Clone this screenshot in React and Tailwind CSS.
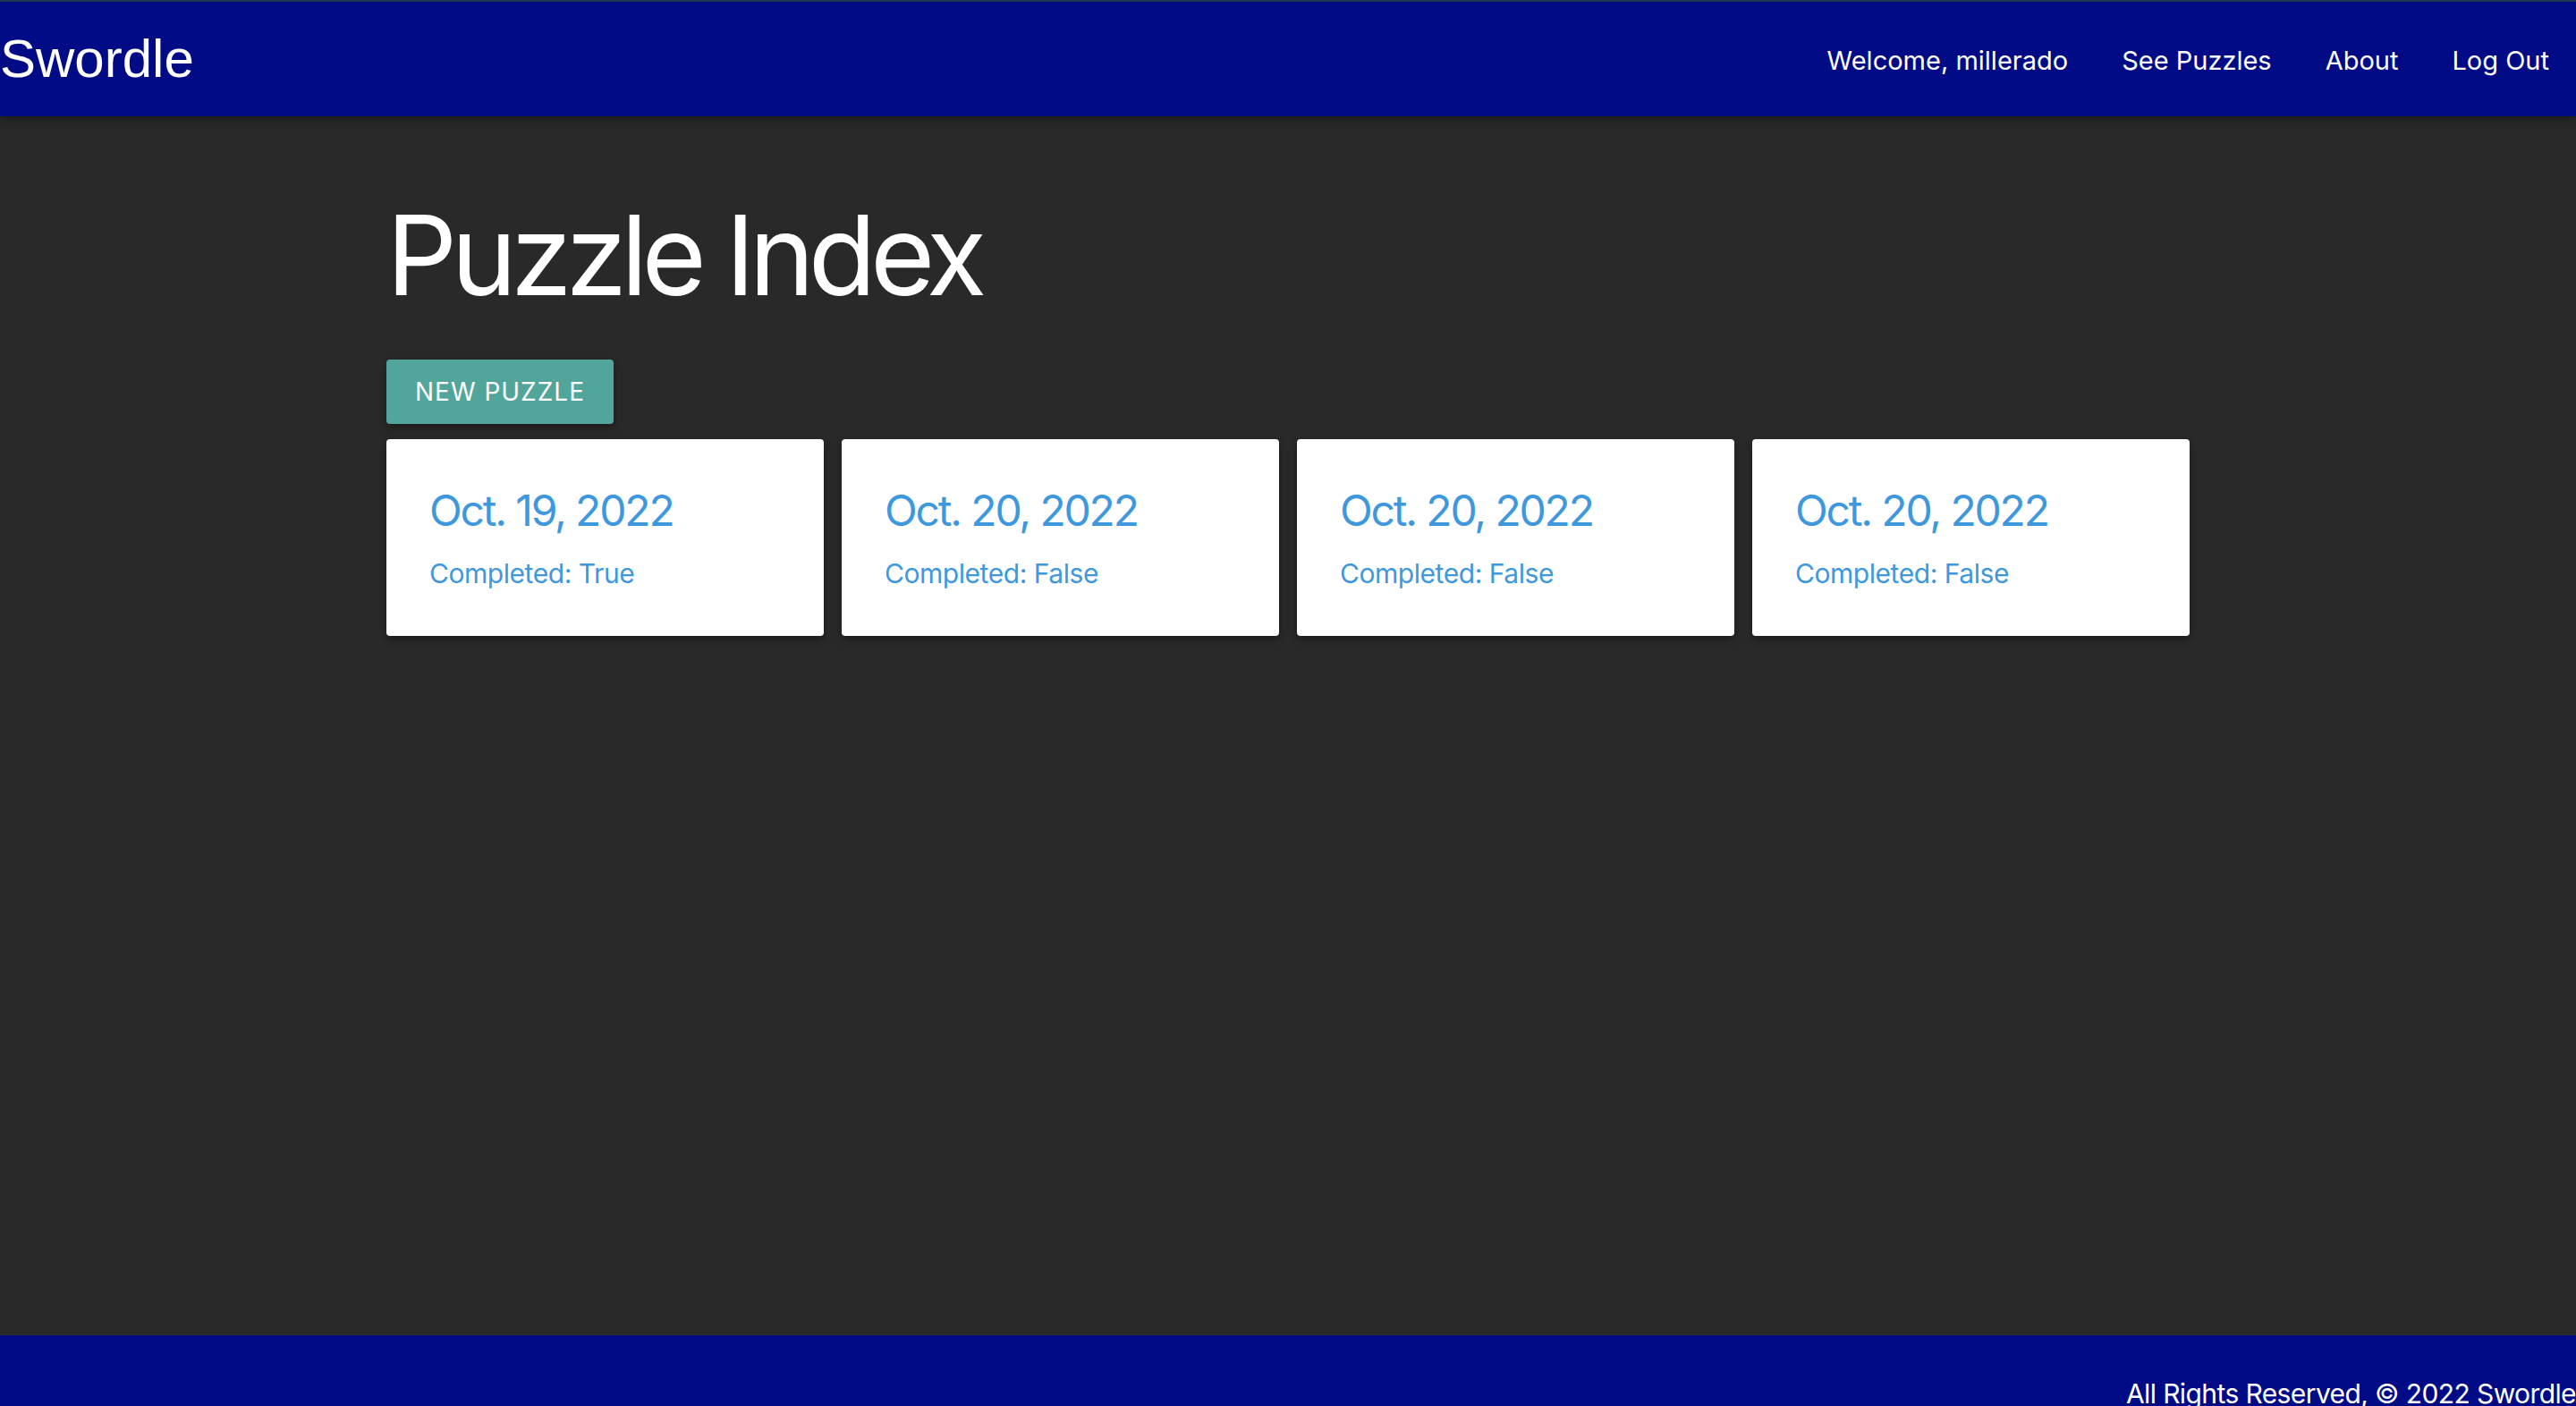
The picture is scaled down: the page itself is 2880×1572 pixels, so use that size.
const puzzles = [
  { date: "Oct. 19, 2022", completed: "True" },
  { date: "Oct. 20, 2022", completed: "False" },
  { date: "Oct. 20, 2022", completed: "False" },
  { date: "Oct. 20, 2022", completed: "False" },
];

const navLinks = ["Welcome, millerado", "See Puzzles", "About", "Log Out"];

export default function App() {
  return (
    <div className="flex h-[1572px] flex-col overflow-hidden bg-[#292929] font-['Inter',sans-serif]">
      <nav className="relative z-10 flex h-[130px] shrink-0 items-center justify-between border-t-2 border-[#1b3a52] bg-[#000b85] shadow-[0_4px_10px_rgba(0,0,0,0.35)]">
        <a className="font-['Liberation_Sans',Arial,sans-serif] text-[60px] leading-none text-white">
          Swordle
        </a>
        <ul className="flex items-center pt-[3px]">
          {navLinks.map((link) => (
            <li key={link} className="px-[30px] text-[29px] text-white">
              {link}
            </li>
          ))}
        </ul>
      </nav>

      <main className="flex-1">
        <div className="mx-auto w-[2016px]">
          <h1 className="mt-[87px] text-[124px] leading-[136px] tracking-[-0.055em] text-white">
            Puzzle Index
          </h1>
          <button className="mt-[49px] flex h-[72px] items-center rounded-[4px] bg-[#52a59a] px-[32px] text-[28px] uppercase tracking-[1px] text-white shadow-[0_4px_8px_rgba(0,0,0,0.35)]">
            New Puzzle
          </button>
          <div className="mt-[17px] grid grid-cols-4 gap-[20px]">
            {puzzles.map((puzzle, index) => (
              <div
                key={index}
                className="rounded-[4px] bg-white p-[48px] shadow-[0_4px_8px_rgba(0,0,0,0.35)]"
              >
                <p className="mb-[16px] text-[48px] leading-[64px] tracking-[-0.045em] text-[#3e98de]">
                  {puzzle.date}
                </p>
                <p className="text-[30px] leading-[44px] tracking-[-0.015em] text-[#3e98de]">
                  Completed: {puzzle.completed}
                </p>
              </div>
            ))}
          </div>
        </div>
      </main>

      <footer className="h-[79px] shrink-0 bg-[#000b85] pt-[43px] text-right">
        <p className="text-[30px] leading-[45px] tracking-[-0.02em] text-white">
          All Rights Reserved, © 2022 Swordle
        </p>
      </footer>
    </div>
  );
}
